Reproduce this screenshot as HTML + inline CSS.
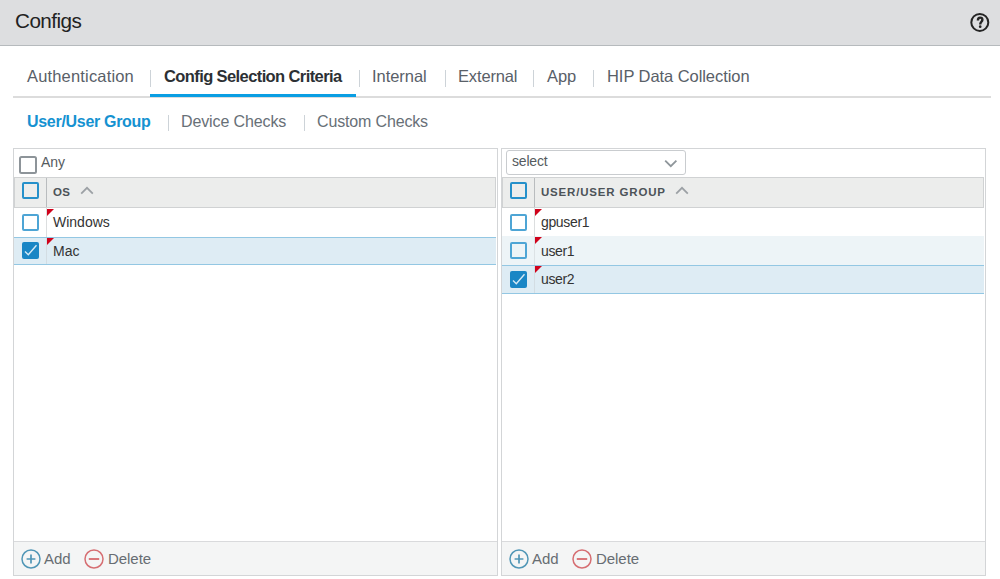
<!DOCTYPE html>
<html><head><meta charset="utf-8">
<style>
*{margin:0;padding:0;box-sizing:border-box}
html,body{width:1000px;height:579px;overflow:hidden;background:#fff}
body{position:relative;font-family:"Liberation Sans",sans-serif}
.a{position:absolute}
.t{position:absolute;white-space:nowrap;line-height:20px}
</style></head><body>
<!-- header -->
<div class="a" style="left:0;top:0;width:1000px;height:45px;background:#dddee0"></div>
<div class="a" style="left:0;top:45px;width:1000px;height:1px;background:#b6babd"></div>
<div class="t" style="left:15px;top:10.5px;font-size:20.7px;letter-spacing:-0.55px;color:#222">Configs</div>
<svg class="a" style="left:969px;top:12px" width="22" height="22" viewBox="0 0 22 22">
<circle cx="10.8" cy="10.4" r="8.5" fill="none" stroke="#242424" stroke-width="2"/>
<path d="M8.9 8.5 C8.9 6.5 9.9 5.6 11.1 5.6 C12.5 5.6 13.4 6.5 13.4 7.8 C13.4 9.7 11.2 10 11.2 12.4" fill="none" stroke="#242424" stroke-width="2.4"/>
<circle cx="11.2" cy="14.7" r="1.35" fill="#242424"/>
</svg>

<!-- tabs -->
<div class="a" style="left:13px;top:96px;width:978px;height:2px;background:#dcdcdc"></div>
<div class="a" style="left:150px;top:94px;width:206px;height:3px;background:#0a9ee3"></div>
<div class="t" style="left:27px;top:66px;font-size:16.5px;letter-spacing:0.17px;color:#596068">Authentication</div>
<div class="a" style="left:150px;top:70px;width:1px;height:17px;background:#cdd3d8"></div>
<div class="t" style="left:164px;top:66px;font-size:16.5px;font-weight:bold;letter-spacing:-0.6px;color:#2c3034">Config Selection Criteria</div>
<div class="a" style="left:359px;top:70px;width:1px;height:17px;background:#cdd3d8"></div>
<div class="t" style="left:372px;top:66px;font-size:16.5px;letter-spacing:-0.05px;color:#596068">Internal</div>
<div class="a" style="left:445px;top:70px;width:1px;height:17px;background:#cdd3d8"></div>
<div class="t" style="left:458px;top:66px;font-size:16.5px;letter-spacing:-0.15px;color:#596068">External</div>
<div class="a" style="left:533px;top:70px;width:1px;height:17px;background:#cdd3d8"></div>
<div class="t" style="left:547px;top:66px;font-size:16.5px;letter-spacing:-0.1px;color:#596068">App</div>
<div class="a" style="left:593px;top:70px;width:1px;height:17px;background:#cdd3d8"></div>
<div class="t" style="left:607px;top:66px;font-size:16.5px;letter-spacing:-0.06px;color:#596068">HIP Data Collection</div>

<!-- subtabs -->
<div class="t" style="left:27px;top:112px;font-size:16px;font-weight:bold;letter-spacing:-0.3px;color:#1592d1">User/User Group</div>
<div class="a" style="left:168px;top:115px;width:1px;height:16px;background:#cdd3d8"></div>
<div class="t" style="left:181px;top:112px;font-size:16px;letter-spacing:-0.12px;color:#687077">Device Checks</div>
<div class="a" style="left:304px;top:115px;width:1px;height:16px;background:#cdd3d8"></div>
<div class="t" style="left:317px;top:112px;font-size:16px;letter-spacing:-0.15px;color:#687077">Custom Checks</div>

<!-- left panel -->
<div class="a" style="left:13px;top:148px;width:485px;height:428px;border:1px solid #d3d5d7;background:#fff"></div>
<div class="a" style="left:14px;top:541px;width:483px;height:34px;border-top:1px solid #d9dadc;background:#f4f5f5"></div>
<div class="a" style="left:14px;top:177px;width:482px;height:31px;border:1px solid #d0d2d3;background:#ecedec"></div>
<div class="a" style="left:46px;top:178px;width:1px;height:29px;background:#b9bcbe"></div>
<div class="a" style="left:22px;top:182px;width:17px;height:17px;border:2.2px solid #2590ca;border-radius:2px"></div>
<svg class="a" style="left:21px;top:549px" width="20" height="20" viewBox="0 0 20 20"><circle cx="10" cy="10" r="9" fill="none" stroke="#5096b6" stroke-width="1.5"/><path d="M5.6 10H14.4M10 5.6V14.4" stroke="#5096b6" stroke-width="1.7"/></svg>
<div class="t" style="left:44px;top:549px;font-size:15px;letter-spacing:-0.1px;color:#676d72">Add</div>
<svg class="a" style="left:84px;top:549px" width="20" height="20" viewBox="0 0 20 20"><circle cx="10" cy="10" r="9" fill="none" stroke="#d66e72" stroke-width="1.5"/><path d="M4.8 10H15.2" stroke="#d6696d" stroke-width="1.8"/></svg>
<div class="t" style="left:108px;top:549px;font-size:15px;letter-spacing:-0.05px;color:#676d72">Delete</div>
<div class="a" style="left:19px;top:156px;width:18px;height:18px;border:2px solid #8d9499;border-radius:2.5px"></div>
<div class="t" style="left:41px;top:152px;font-size:14px;color:#555b60">Any</div>
<div class="t" style="left:53px;top:182px;font-size:11.5px;font-weight:bold;letter-spacing:0.4px;color:#4d5358">OS</div>
<svg class="a" style="left:80px;top:186px" width="14" height="9" viewBox="0 0 14 9"><path d="M1.2 7.6 L7 1.8 L12.8 7.6" fill="none" stroke="#9ca1a5" stroke-width="1.8"/></svg>
<div class="a" style="left:46px;top:208px;width:1px;height:29px;background:#dcdedf"></div>
<div class="a" style="left:22px;top:214px;width:17px;height:17px;border:2px solid #4ea5d5;border-radius:2px"></div>
<svg class="a" style="left:47px;top:209px" width="7" height="7" viewBox="0 0 7 7"><path d="M0 0H7L0 7Z" fill="#d0021b"/></svg>
<div class="t" style="left:53px;top:212px;font-size:14px;color:#333">Windows</div>
<div class="a" style="left:14px;top:237px;width:482px;height:28px;border-top:1px solid #93c7e3;border-bottom:1px solid #93c7e3;background:#deecf4"></div>
<div class="a" style="left:46px;top:238px;width:1px;height:26px;background:#d3dde3"></div>
<div class="a" style="left:22px;top:242px;width:17px;height:17px;background:#1a86c5;border-radius:2px"></div><svg class="a" style="left:22px;top:242px" width="17" height="17" viewBox="0 0 17 17"><path d="M3 9.5 L6.3 12.7 L14.5 3.2" fill="none" stroke="#d5e9f5" stroke-width="1.4"/></svg>
<svg class="a" style="left:47px;top:238px" width="7" height="7" viewBox="0 0 7 7"><path d="M0 0H7L0 7Z" fill="#d0021b"/></svg>
<div class="t" style="left:53px;top:241px;font-size:14px;color:#333">Mac</div>
<!-- right panel -->
<div class="a" style="left:501px;top:148px;width:485px;height:428px;border:1px solid #d3d5d7;background:#fff"></div>
<div class="a" style="left:502px;top:541px;width:483px;height:34px;border-top:1px solid #d9dadc;background:#f4f5f5"></div>
<div class="a" style="left:502px;top:177px;width:482px;height:31px;border:1px solid #d0d2d3;background:#ecedec"></div>
<div class="a" style="left:534px;top:178px;width:1px;height:29px;background:#b9bcbe"></div>
<div class="a" style="left:510px;top:182px;width:17px;height:17px;border:2.2px solid #2590ca;border-radius:2px"></div>
<svg class="a" style="left:509px;top:549px" width="20" height="20" viewBox="0 0 20 20"><circle cx="10" cy="10" r="9" fill="none" stroke="#5096b6" stroke-width="1.5"/><path d="M5.6 10H14.4M10 5.6V14.4" stroke="#5096b6" stroke-width="1.7"/></svg>
<div class="t" style="left:532px;top:549px;font-size:15px;letter-spacing:-0.1px;color:#676d72">Add</div>
<svg class="a" style="left:572px;top:549px" width="20" height="20" viewBox="0 0 20 20"><circle cx="10" cy="10" r="9" fill="none" stroke="#d66e72" stroke-width="1.5"/><path d="M4.8 10H15.2" stroke="#d6696d" stroke-width="1.8"/></svg>
<div class="t" style="left:596px;top:549px;font-size:15px;letter-spacing:-0.05px;color:#676d72">Delete</div>
<div class="a" style="left:506px;top:150px;width:180px;height:25px;border:1px solid #c9cccf;border-radius:3px;background:#fff"></div>
<div class="t" style="left:512px;top:151px;font-size:14px;letter-spacing:-0.2px;color:#555b60">select</div>
<svg class="a" style="left:664px;top:159px" width="14" height="9" viewBox="0 0 14 9"><path d="M1.2 1.6 L6.8 7.2 L12.4 1.6" fill="none" stroke="#8f969b" stroke-width="1.8"/></svg>
<div class="t" style="left:541px;top:182px;font-size:11.5px;font-weight:bold;letter-spacing:0.82px;color:#4d5358">USER/USER GROUP</div>
<svg class="a" style="left:675px;top:186px" width="14" height="9" viewBox="0 0 14 9"><path d="M1.2 7.6 L7 1.8 L12.8 7.6" fill="none" stroke="#9ca1a5" stroke-width="1.8"/></svg>
<div class="a" style="left:534px;top:208px;width:1px;height:28px;background:#dcdedf"></div>
<div class="a" style="left:510px;top:214px;width:17px;height:17px;border:2px solid #4ea5d5;border-radius:2px"></div>
<svg class="a" style="left:535px;top:209px" width="7" height="7" viewBox="0 0 7 7"><path d="M0 0H7L0 7Z" fill="#d0021b"/></svg>
<div class="t" style="left:541px;top:212px;font-size:14px;letter-spacing:-0.35px;color:#333">gpuser1</div>
<div class="a" style="left:502px;top:236px;width:482px;height:29px;background:#edf4f7"></div>
<div class="a" style="left:534px;top:236px;width:1px;height:29px;background:#dce2e5"></div>
<div class="a" style="left:510px;top:242px;width:17px;height:17px;border:2px solid #4ea5d5;border-radius:2px"></div>
<svg class="a" style="left:535px;top:237px" width="7" height="7" viewBox="0 0 7 7"><path d="M0 0H7L0 7Z" fill="#d0021b"/></svg>
<div class="t" style="left:541px;top:241px;font-size:14px;letter-spacing:-0.35px;color:#333">user1</div>
<div class="a" style="left:502px;top:265px;width:482px;height:29px;border-top:1px solid #93c7e3;border-bottom:1px solid #93c7e3;background:#deecf4"></div>
<div class="a" style="left:534px;top:266px;width:1px;height:27px;background:#d3dde3"></div>
<div class="a" style="left:510px;top:271px;width:17px;height:17px;background:#1a86c5;border-radius:2px"></div><svg class="a" style="left:510px;top:271px" width="17" height="17" viewBox="0 0 17 17"><path d="M3 9.5 L6.3 12.7 L14.5 3.2" fill="none" stroke="#d5e9f5" stroke-width="1.4"/></svg>
<svg class="a" style="left:535px;top:266px" width="7" height="7" viewBox="0 0 7 7"><path d="M0 0H7L0 7Z" fill="#d0021b"/></svg>
<div class="t" style="left:541px;top:269px;font-size:14px;letter-spacing:-0.35px;color:#333">user2</div>
</body></html>
